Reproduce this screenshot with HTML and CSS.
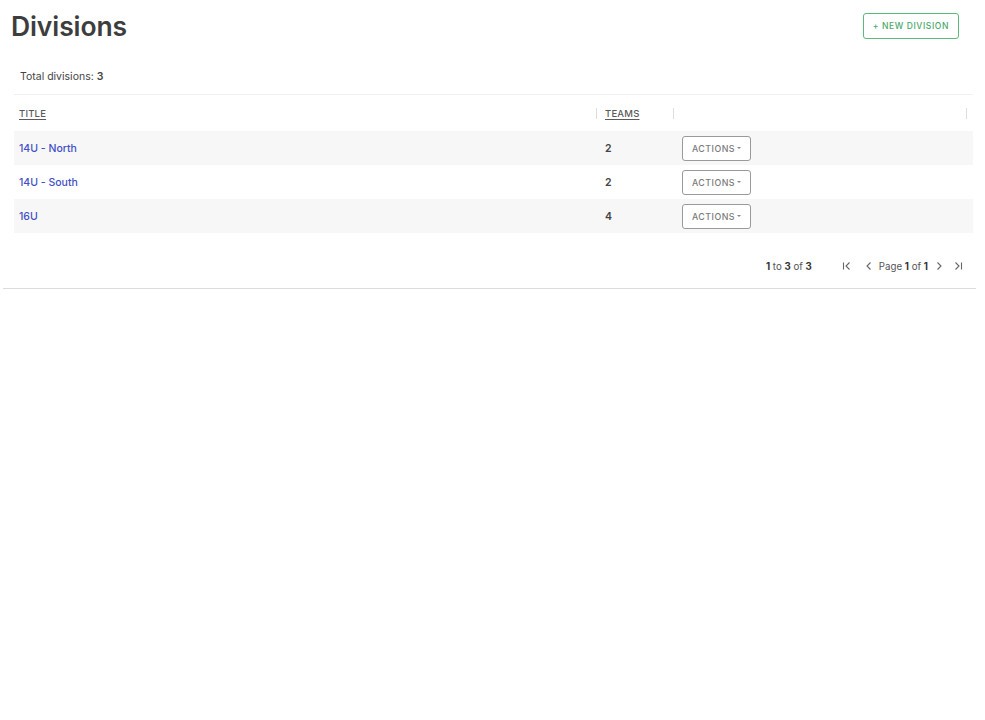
FILE: index.html
```html
<!DOCTYPE html>
<html lang="en">
<head>
<meta charset="utf-8">
<title>Divisions</title>
<link rel="stylesheet" href="styles.css">
</head>
<body>
<div class="page">
  <header class="page-head">
    <h1 class="page-title">Divisions</h1>
    <button class="btn-new">+ NEW DIVISION</button>
  </header>

  <section class="panel">
    <div class="total">Total divisions: <b>3</b></div>

    <div class="grid">
      <div class="grid-head">
        <div class="cell col-title"><span class="head-label">TITLE</span></div>
        <div class="cell col-teams"><span class="sep"></span><span class="head-label">TEAMS</span></div>
        <div class="cell col-actions"><span class="sep"></span></div>
        <div class="cell col-end"><span class="sep"></span></div>
      </div>

      <div class="grid-row odd">
        <div class="cell col-title"><a class="link" href="#">14U - North</a></div>
        <div class="cell col-teams num">2</div>
        <div class="cell col-actions"><button class="btn-actions">ACTIONS <span class="caret"></span></button></div>
        <div class="cell col-end"></div>
      </div>
      <div class="grid-row">
        <div class="cell col-title"><a class="link" href="#">14U - South</a></div>
        <div class="cell col-teams num">2</div>
        <div class="cell col-actions"><button class="btn-actions">ACTIONS <span class="caret"></span></button></div>
        <div class="cell col-end"></div>
      </div>
      <div class="grid-row odd">
        <div class="cell col-title"><a class="link" href="#">16U</a></div>
        <div class="cell col-teams num">4</div>
        <div class="cell col-actions"><button class="btn-actions">ACTIONS <span class="caret"></span></button></div>
        <div class="cell col-end"></div>
      </div>
    </div>

    <div class="pager">
      <span class="pager-summary"><b>1</b> to <b>3</b> of <b>3</b></span>
      <span class="pager-nav">
        <svg class="pg-icon pg-first" viewBox="0 0 12 12" width="12" height="12"><path d="M2.5 2.5v7M8.5 2.5 5 6l3.5 3.5" fill="none" stroke="#666" stroke-width="1.1"/></svg>
        <svg class="pg-icon pg-prev" viewBox="0 0 12 12" width="12" height="12"><path d="M7.5 2.5 4 6l3.5 3.5" fill="none" stroke="#666" stroke-width="1.1"/></svg>
        <span class="pager-page">Page <b>1</b> of <b>1</b></span>
        <svg class="pg-icon pg-next" viewBox="0 0 12 12" width="12" height="12"><path d="M4.5 2.5 8 6l-3.5 3.5" fill="none" stroke="#666" stroke-width="1.1"/></svg>
        <svg class="pg-icon pg-last" viewBox="0 0 12 12" width="12" height="12"><path d="M3.5 2.5 7 6l-3.5 3.5M9.5 2.5v7" fill="none" stroke="#666" stroke-width="1.1"/></svg>
      </span>
    </div>
  </section>
</div>
</body>
</html>
```

FILE: styles.css
```css
* { box-sizing: border-box; }

html, body {
  margin: 0;
  background: #fff;
  font-family: Inter, "Noto Sans", "Liberation Sans", sans-serif;
  color: #444;
}

.page {
  padding: 12px 9px 0 3px;
}

.page-head {
  display: flex;
  justify-content: space-between;
  align-items: flex-start;
  padding-left: 8px;
  padding-right: 17px;
}

.page-title {
  margin: 0;
  font-size: 26.5px;
  font-weight: 600;
  color: #3d3d3d;
  line-height: 28px;
  letter-spacing: -0.1px;
}

.btn-new {
  margin-top: 1px;
  height: 26px;
  padding: 0 9px;
  background: #fff;
  border: 1px solid #5bb97b;
  border-radius: 3px;
  color: #4aa96a;
  font-family: inherit;
  font-size: 8.5px;
  font-weight: 500;
  letter-spacing: 0.6px;
}

.panel {
  margin-top: 30px;
  border-bottom: 1px solid #dcdcdc;
  padding-bottom: 15px;
}

.total {
  padding-left: 17px;
  font-size: 10.5px;
  color: #444;
  height: 24px;
  line-height: 14px;
}
.total b { font-weight: 600; }

.grid {
  margin: 0 0 0 11px;
  border-top: 1px solid #f0f0f0;
  width: 959px;
}

.grid-head,
.grid-row {
  display: grid;
  grid-template-columns: 582px 77px 293px 7px;
  align-items: center;
}

.grid-head { height: 36px; }
.grid-row { height: 34px; }
.grid-row.odd { background: #f7f7f7; }

.cell {
  display: flex;
  align-items: center;
  height: 100%;
  font-size: 10.5px;
}

.col-title { padding-left: 5px; }
.col-teams { padding-left: 9px; position: relative; }
.col-actions { padding-left: 9px; position: relative; }
.col-end { position: relative; }

.sep {
  position: absolute;
  left: 0;
  top: 13px;
  width: 1px;
  height: 11px;
  background: #ddd;
}

.head-label {
  font-size: 9.5px;
  font-weight: 500;
  color: #5a5a5a;
  text-decoration: underline;
  text-underline-offset: 2px;
  letter-spacing: 0.2px;
}

.link {
  color: #3f51c6;
  text-decoration: none;
  font-weight: 500;
}

.num {
  font-weight: 600;
  color: #444;
}

.btn-actions {
  height: 25px;
  width: 69px;
  padding: 0;
  background: #fff;
  border: 1px solid #9a9a9a;
  border-radius: 3px;
  color: #7a7a7a;
  font-family: inherit;
  font-size: 8.8px;
  font-weight: 500;
  letter-spacing: 0.5px;
  display: flex;
  align-items: center;
  justify-content: center;
  gap: 2px;
}

.caret {
  display: inline-block;
  width: 0;
  height: 0;
  border-left: 2.5px solid transparent;
  border-right: 2.5px solid transparent;
  border-top: 2.5px solid #888;
}

.pager {
  display: flex;
  justify-content: flex-end;
  align-items: center;
  margin-top: 26px;
  padding-right: 12px;
  font-size: 9.7px;
  color: #555;
  height: 14px;
}
.pager b { font-weight: 700; color: #333; }

.pager-summary { margin-right: 29px; }

.pager-nav {
  display: flex;
  align-items: center;
}

.pg-icon { display: block; }
.pg-first { margin-right: 10px; }
.pg-prev { margin-right: 4px; }
.pager-page { margin-right: 5px; }
.pg-next { margin-right: 7px; }
```
